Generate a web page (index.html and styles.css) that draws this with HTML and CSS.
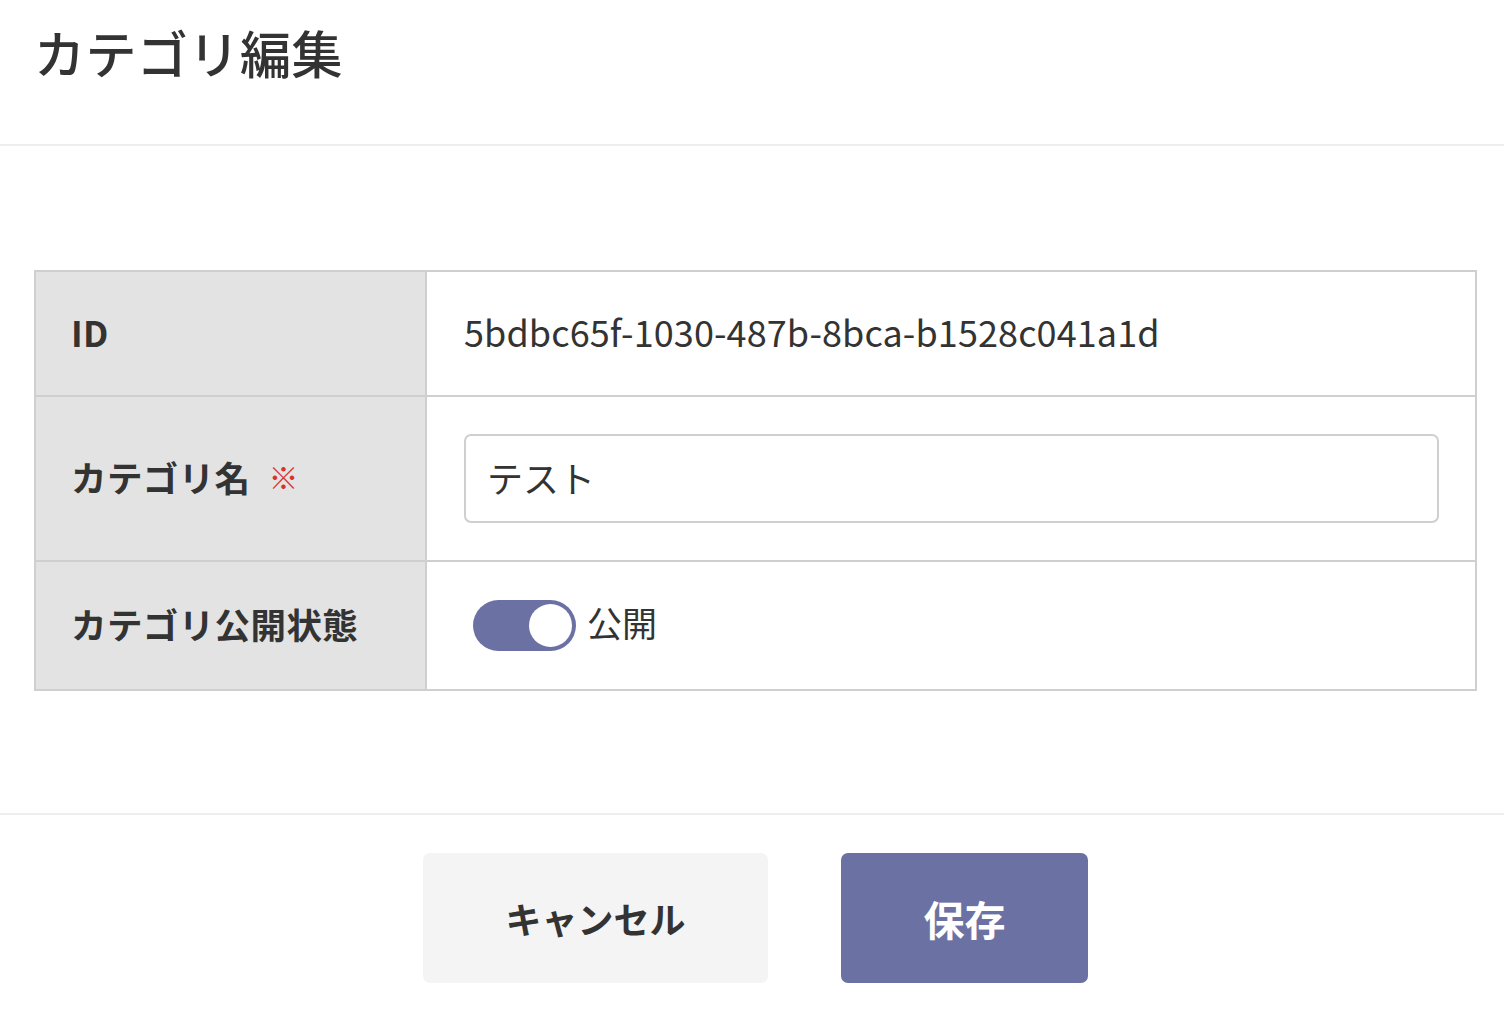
FILE: index.html
```html
<!DOCTYPE html>
<html lang="ja">
<head>
<meta charset="utf-8">
<title>カテゴリ編集</title>
<link rel="stylesheet" href="styles.css">
</head>
<body>
<div class="modal">
  <header class="modal-header">
    <h1 class="modal-title">カテゴリ編集</h1>
  </header>
  <main class="modal-body">
    <div class="form-table">
      <div class="row row-id">
        <div class="label">ID</div>
        <div class="value"><span class="id-text">5bdbc65f-1030-487b-8bca-b1528c041a1d</span></div>
      </div>
      <div class="row row-name">
        <div class="label">カテゴリ名<span class="required">※</span></div>
        <div class="value"><input class="text-input" type="text" value="テスト"></div>
      </div>
      <div class="row row-status">
        <div class="label">カテゴリ公開状態</div>
        <div class="value">
          <span class="toggle"><span class="knob"></span></span>
          <span class="toggle-label">公開</span>
        </div>
      </div>
    </div>
  </main>
  <footer class="modal-footer">
    <button class="btn btn-cancel" type="button">キャンセル</button>
    <button class="btn btn-save" type="button">保存</button>
  </footer>
</div>
</body>
</html>
```

FILE: styles.css
```css
* { box-sizing: border-box; }
html, body {
  margin: 0;
  padding: 0;
  background: #ffffff;
}
body {
  font-family: "Noto Sans CJK JP", "Noto Sans", sans-serif;
  color: #333333;
  width: 1504px;
  height: 1010px;
  overflow: hidden;
}
.modal-header {
  height: 146px;
  border-bottom: 2px solid #eeeeee;
  padding: 15px 0 0 34px;
}
.modal-title {
  margin: 0;
  font-size: 51px;
  line-height: 75px;
  font-weight: 500;
  color: #333333;
  letter-spacing: 0.5px;
}
.modal-body {
  padding: 124px 27px 0 34px;
  height: 669px;
  border-bottom: 2px solid #eeeeee;
}
.form-table {
  border: 2px solid #cfcfcf;
  border-bottom: none;
}
.row {
  display: grid;
  grid-template-columns: 391px 1fr;
  border-bottom: 2px solid #cfcfcf;
}
.row-id { height: 125px; }
.row-name { height: 165px; }
.row-status { height: 129px; }
.label {
  background: #e3e3e3;
  border-right: 2px solid #cfcfcf;
  display: flex;
  align-items: center;
  padding: 0 0 5px 35px;
  font-size: 35.5px;
  font-weight: 700;
  color: #333333;
  letter-spacing: 0.4px;
}
.required {
  color: #d9332c;
  font-size: 30px;
  margin-left: 18px;
  font-weight: 700;
}
.value {
  display: flex;
  align-items: center;
  padding: 0 36px 0 37px;
}
.id-text {
  font-size: 36px;
  font-weight: 400;
  color: #333333;
  letter-spacing: 0.1px;
  margin-top: -6px;
}
.text-input {
  width: 100%;
  height: 89px;
  border: 2px solid #cfcfcf;
  border-radius: 7px;
  padding: 0 21px 4px;
  font-family: "Noto Sans CJK JP", "Noto Sans", sans-serif;
  font-size: 36px;
  color: #333333;
  background: #ffffff;
  outline: none;
}
.toggle {
  width: 103px;
  height: 51px;
  margin-left: 9px;
  border-radius: 26px;
  background: #6b72a3;
  display: flex;
  align-items: center;
  justify-content: flex-end;
  padding-right: 4px;
}
.knob {
  width: 43px;
  height: 43px;
  border-radius: 50%;
  background: #ffffff;
}
.toggle-label {
  margin-left: 11px;
  font-size: 35px;
  font-weight: 400;
  color: #333333;
  margin-top: -8px;
}
.modal-footer {
  display: flex;
  justify-content: center;
  gap: 73px;
  padding-top: 38px;
  padding-left: 7px;
}
.btn {
  height: 130px;
  border: none;
  border-radius: 7px;
  font-family: "Noto Sans CJK JP", "Noto Sans", sans-serif;
  font-weight: 700;
  cursor: pointer;
}
.btn-cancel {
  width: 345px;
  background: #f4f4f4;
  color: #333333;
  font-size: 36px;
}
.btn-save {
  width: 247px;
  background: #6b72a3;
  color: #ffffff;
  font-size: 41px;
}
```
